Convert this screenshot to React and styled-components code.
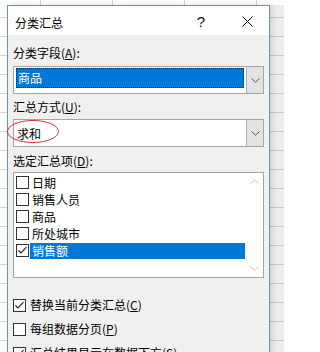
import React from 'react';
import styled, { createGlobalStyle } from 'styled-components';

const Global = createGlobalStyle`
  html, body { margin: 0; padding: 0; }
  body {
    width: 284px; height: 352px; overflow: hidden;
    font-family: "Noto Sans CJK SC", "Noto Sans", sans-serif;
    color: #000;
  }
`;

const Sheet = styled.div`
  width: 284px;
  height: 352px;
  overflow: hidden;
  box-sizing: border-box;
  padding: 5px 0 0 7px;
  background-color: #fff;
  background-image:
    repeating-linear-gradient(to bottom, transparent 0 17px, #d6d6d6 17px 18px, transparent 18px 19px),
    repeating-linear-gradient(to right, transparent 0 40px, #d6d6d6 40px 41px, transparent 41px 72px);
`;

const Dialog = styled.div`
  width: 263px;
  height: 380px;
  box-sizing: border-box;
  border: 1px solid #7393a7;
  background: #f0f0f0;
  box-shadow: 16px 0 0 rgba(0, 0, 0, 0.07), 2px 0 6px rgba(0, 0, 0, 0.14);
  display: flex;
  flex-direction: column;
`;

const TitleBar = styled.div`
  height: 29px;
  background: #fff;
  display: flex;
  align-items: center;
  padding-left: 7px;
`;

const Title = styled.div`
  flex: 1;
  font-size: 12px;
  line-height: 16px;
  margin-top: 4px;
`;

const TitleButton = styled.div`
  width: 44px;
  height: 29px;
  margin-left: ${p => p.$gap || 0}px;
  padding-top: 2px;
  box-sizing: border-box;
  display: flex;
  align-items: center;
  justify-content: center;
  font-family: "Liberation Sans", sans-serif;
  font-size: 15px;
  color: #111;
`;

const Body = styled.div`
  padding: 10px 5px 0 5px;
  display: flex;
  flex-direction: column;
`;

const Label = styled.div`
  font-size: 12px;
  line-height: 16px;
  height: 16px;
  white-space: nowrap;
  margin-top: ${p => p.$mt || 0}px;
  margin-bottom: ${p => p.$mb || 0}px;
`;

const ComboWrap = styled.div`
  position: relative;
`;

const Combo = styled.div`
  height: 28px;
  box-sizing: border-box;
  border: 1px solid #a5a5a5;
  background: #fff;
  display: flex;
  align-items: stretch;
`;

const ComboValue = styled.div`
  flex: 1;
  display: flex;
  align-items: ${p => (p.$selected ? 'flex-start' : 'center')};
  padding: ${p => (p.$selected ? '1px 2px 0 2px' : '0 0 0 3px')};
`;

const SelectedText = styled.div`
  flex: 1;
  height: 20px;
  box-sizing: border-box;
  background: #0078d7;
  color: #fff;
  font-size: 12px;
  line-height: 18px;
  padding-left: 1px;
  border: 1px dotted #0a2a4a;
`;

const PlainText = styled.div`
  font-size: 12px;
  line-height: 16px;
  margin-top: 1px;
`;

const DropButton = styled.div`
  width: 16px;
  background: #e3e3e3;
  border-left: 1px solid #b2b2b2;
  display: flex;
  align-items: center;
  justify-content: center;
`;

const Ellipse = styled.svg`
  position: absolute;
  left: -6px;
  top: 1px;
  overflow: visible;
`;

const ListBox = styled.div`
  height: 106px;
  box-sizing: border-box;
  border: 1px solid #a5a5a5;
  background: #fff;
  display: flex;
`;

const Items = styled.div`
  flex: 1;
  padding-top: 1px;
  display: flex;
  flex-direction: column;
`;

const Item = styled.div`
  height: 17px;
  display: flex;
  align-items: center;
  padding-left: 2px;
`;

const ItemText = styled.div`
  flex: 1;
  height: 16px;
  margin-left: 1px;
  padding-left: 2px;
  font-size: 12px;
  line-height: 16px;
  background: ${p => (p.$selected ? '#0078d7' : 'transparent')};
  color: ${p => (p.$selected ? '#fff' : '#000')};
`;

const ScrollBar = styled.div`
  width: 18px;
  display: flex;
  flex-direction: column;
  justify-content: space-between;
`;

const ScrollArrow = styled.div`
  height: 17px;
  display: flex;
  align-items: center;
  justify-content: center;
`;

const Box = styled.div`
  width: 13px;
  height: 13px;
  flex: none;
  box-sizing: border-box;
  border: 1px solid #333;
  background: #fff;
  display: flex;
  align-items: center;
  justify-content: center;
`;

const Option = styled.div`
  height: 18px;
  display: flex;
  align-items: center;
  gap: 4px;
  margin-top: ${p => p.$mt}px;
  font-size: 12px;
  line-height: 16px;
  white-space: nowrap;
`;

const Chevron = ({ up, color }) => (
  <svg width="9" height="5" viewBox="0 0 9 5">
    <polyline
      points={up ? '0.5,4.5 4.5,0.8 8.5,4.5' : '0.5,0.5 4.5,4.2 8.5,0.5'}
      fill="none"
      stroke={color}
      strokeWidth="1"
    />
  </svg>
);

const Check = ({ checked }) => (
  <Box>
    {checked && (
      <svg width="11" height="11" viewBox="0 0 11 11">
        <polyline points="1.5,5.5 4,8 9.5,2.2" fill="none" stroke="#222" strokeWidth="1.1" />
      </svg>
    )}
  </Box>
);

const items = [
  { name: '日期' },
  { name: '销售人员' },
  { name: '商品' },
  { name: '所处城市' },
  { name: '销售额', checked: true, selected: true },
];

export default function App() {
  return (
    <>
      <Global />
      <Sheet>
        <Dialog>
          <TitleBar>
            <Title>分类汇总</Title>
            <TitleButton>?</TitleButton>
            <TitleButton $gap={2}>
              <svg width="11" height="11" viewBox="0 0 11 11">
                <path d="M0.5 0.5 L10.5 10.5 M10.5 0.5 L0.5 10.5" stroke="#111" strokeWidth="1" />
              </svg>
            </TitleButton>
          </TitleBar>
          <Body>
            <Label $mb={5}>分类字段(<u>A</u>):</Label>
            <Combo>
              <ComboValue $selected>
                <SelectedText>商品</SelectedText>
              </ComboValue>
              <DropButton>
                <Chevron color="#555" />
              </DropButton>
            </Combo>
            <Label $mt={5} $mb={4}>汇总方式(<u>U</u>):</Label>
            <ComboWrap>
              <Combo>
                <ComboValue>
                  <PlainText>求和</PlainText>
                </ComboValue>
                <DropButton>
                  <Chevron color="#555" />
                </DropButton>
              </Combo>
              <Ellipse width="52" height="23" viewBox="0 0 52 23">
                <ellipse cx="26" cy="11.5" rx="25.5" ry="11" fill="none" stroke="#d0353d" strokeWidth="1" />
              </Ellipse>
            </ComboWrap>
            <Label $mt={6} $mb={3}>选定汇总项(<u>D</u>):</Label>
            <ListBox>
              <Items>
                {items.map(it => (
                  <Item key={it.name}>
                    <Check checked={it.checked} />
                    <ItemText $selected={it.selected}>{it.name}</ItemText>
                  </Item>
                ))}
              </Items>
              <ScrollBar>
                <ScrollArrow>
                  <Chevron up color="#c4c4c4" />
                </ScrollArrow>
                <ScrollArrow>
                  <Chevron color="#c4c4c4" />
                </ScrollArrow>
              </ScrollBar>
            </ListBox>
            <Option $mt={18}>
              <Check checked />
              <span>替换当前分类汇总(<u>C</u>)</span>
            </Option>
            <Option $mt={6}>
              <Check />
              <span>每组数据分页(<u>P</u>)</span>
            </Option>
            <Option $mt={6}>
              <Check checked />
              <span>汇总结果显示在数据下方(<u>S</u>)</span>
            </Option>
          </Body>
        </Dialog>
      </Sheet>
    </>
  );
}
